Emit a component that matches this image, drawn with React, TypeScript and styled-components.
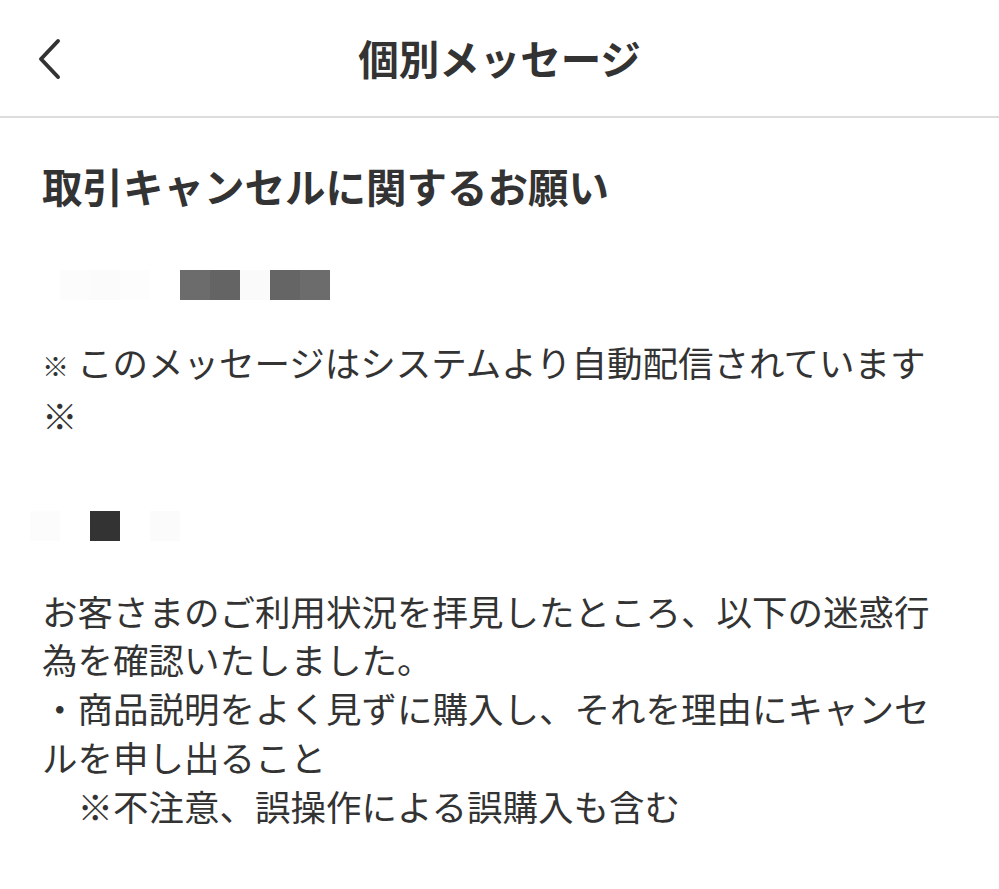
import React from 'react'
import styled, { createGlobalStyle } from 'styled-components'

const GlobalStyle = createGlobalStyle`
  html, body {
    margin: 0;
    padding: 0;
    background: #ffffff;
  }
  body {
    font-family: "Noto Sans CJK JP", "Noto Sans", sans-serif;
    color: #333333;
  }
`

const pixelsTop = ['#fcfcfc', '#fbfbfb', '#fdfdfd', '#ffffff', '#6c6c6c', '#646464', '#fafafa', '#656565', '#6c6c6c']
const pixelsName = ['#fcfcfc', '#ffffff', '#333333', '#ffffff', '#fbfbfb']

function App() {
    return (
        <Page>
            <GlobalStyle />
            <Header>
                <BackButton aria-label='戻る'>
                    <svg width='26' height='42' viewBox='0 0 26 42' fill='none'>
                        <path d='M22 3 L5 21 L22 39' stroke='#333' strokeWidth='4' strokeLinecap='round' strokeLinejoin='round' />
                    </svg>
                </BackButton>
                <HeaderTitle>個別メッセージ</HeaderTitle>
            </Header>
            <Content>
                <Subject>取引キャンセルに関するお願い</Subject>
                <PixelRow offset={18} top={56}>
                    {pixelsTop.map((c, k) => <Pixel key={k} color={c} />)}
                </PixelRow>
                <Paragraph top={38}>
                    <Mark>※</Mark>このメッセージはシステムより自動配信されています※
                </Paragraph>
                <PixelRow offset={-12} top={71}>
                    {pixelsName.map((c, k) => <Pixel key={k} color={c} />)}
                </PixelRow>
                <Paragraph top={46}>
                    お客さまのご利用状況を拝見したところ、以下の迷惑行為を確認いたしました。
                    <br />
                    ・商品説明をよく見ずに購入し、それを理由にキャンセルを申し出ること
                    <br />
                    {'\u3000'}※不注意、誤操作による誤購入も含む
                </Paragraph>
            </Content>
        </Page>
    )
}

export default App

const Page = styled.div`
    width: 999px;
    min-height: 889px;
    background: #ffffff;
`

const Header = styled.header`
    position: relative;
    display: flex;
    align-items: center;
    justify-content: center;
    height: 116px;
    border-bottom: 2px solid #dcdcdc;
`

const BackButton = styled.button`
    position: absolute;
    left: 36px;
    top: 38px;
    padding: 0;
    border: none;
    background: none;
    display: flex;
`

const HeaderTitle = styled.h1`
    margin: 0;
    font-size: 40.5px;
    font-weight: 700;
    line-height: 1;
    color: #333333;
`

const Content = styled.main`
    padding: 40px 42px 0;
`

const Subject = styled.h2`
    margin: 0;
    font-size: 40.5px;
    font-weight: 700;
    line-height: 56px;
    color: #333333;
`

const PixelRow = styled.div<{ offset: number; top: number }>`
    display: flex;
    margin-left: ${p => p.offset}px;
    margin-top: ${p => p.top}px;
`

const Pixel = styled.span<{ color: string }>`
    width: 30px;
    height: 30px;
    background: ${p => p.color};
`

const Paragraph = styled.p<{ top: number }>`
    margin: ${p => p.top}px 0 0;
    font-size: 35.5px;
    line-height: 48.8px;
    color: #333333;
    word-break: break-all;
`

const Mark = styled.span`
    font-size: 27px;
    padding-right: 8px;
`
